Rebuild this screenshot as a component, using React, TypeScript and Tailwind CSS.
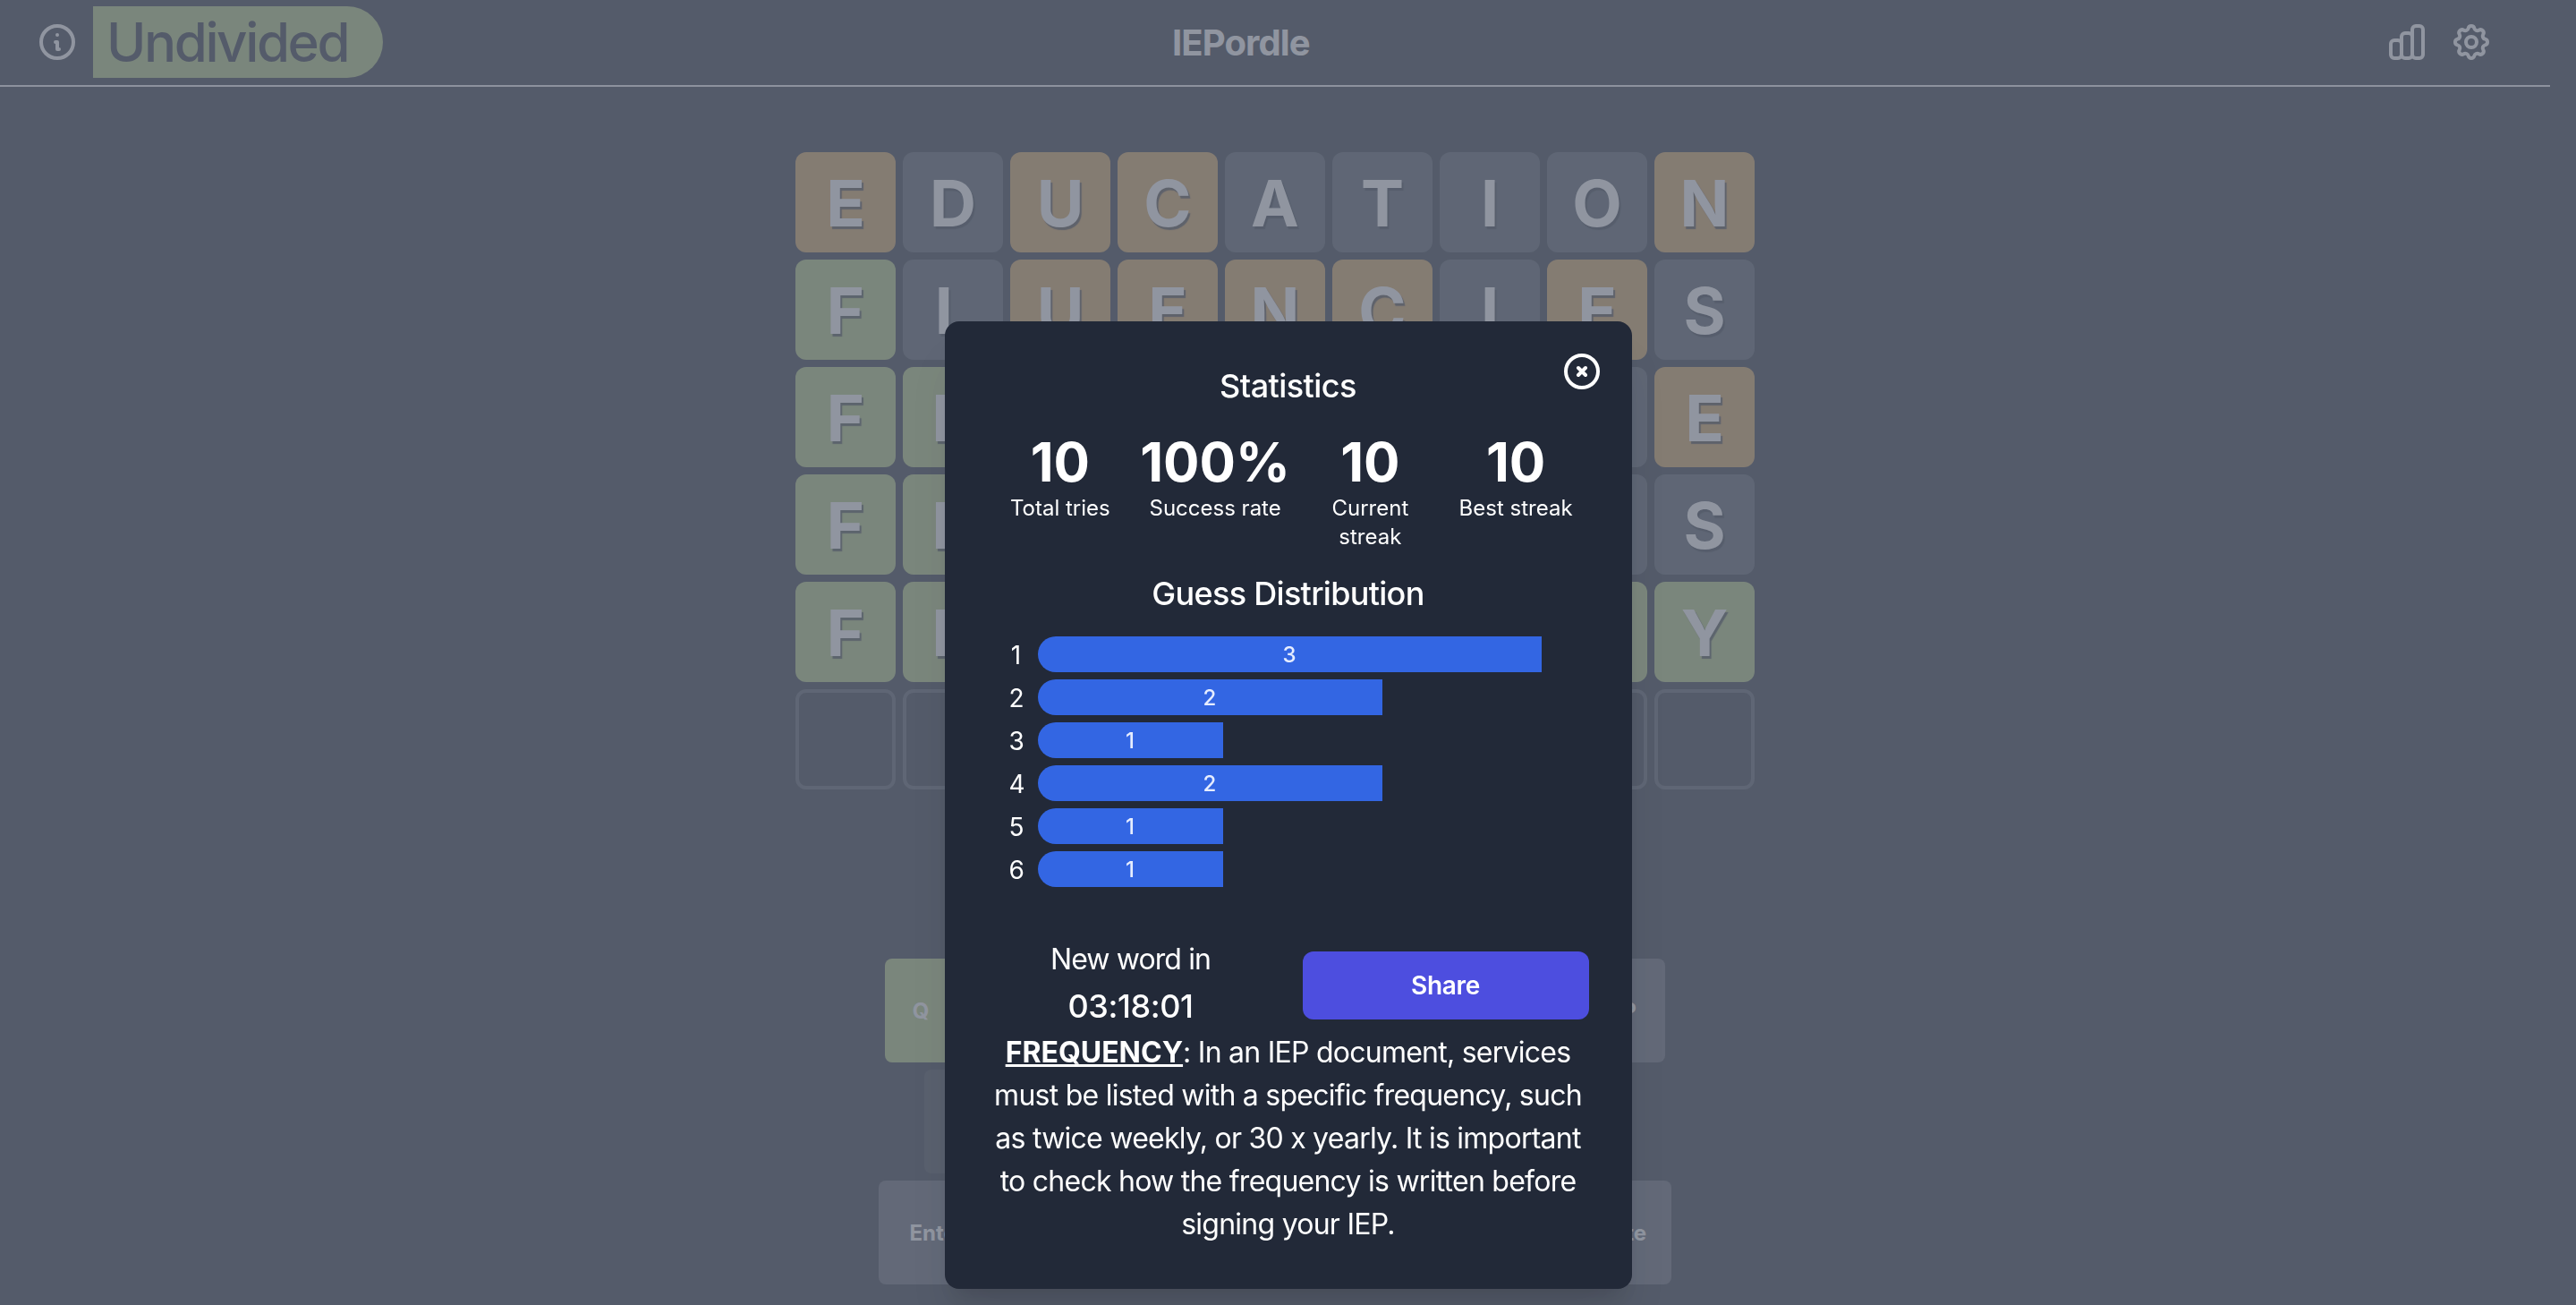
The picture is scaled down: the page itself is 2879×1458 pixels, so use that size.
import React from "react";

type S = "g" | "o" | "a" | "e";
const rows: { word: string; st: string }[] = [
  { word: "EDUCATION", st: "oaooaaaao" },
  { word: "FLUENCIES", st: "gaooooaoa" },
  { word: "FRANCHISE", st: "ggaooaaao" },
  { word: "FRESHNESS", st: "gggaooaaa" },
  { word: "FREQUENCY", st: "ggggggggg" },
  { word: "         ", st: "eeeeeeeee" },
];

const tileBg: Record<S, string> = {
  g: "bg-[#a8c270]",
  o: "bg-[#d09a48]",
  a: "bg-[#3c4654]",
  e: "border-4 border-[#3c4654]",
};

const keys1 = "QWERTYUIOP".split("");
const keys2 = "ASDFGHJKL".split("");
const keys3 = "ZXCVBNM".split("");
const keyBg: Record<string, string> = { Q: "bg-[#a8c270]", A: "bg-[#272d3b]" };

const stats = [
  ["10", "Total tries"],
  ["100%", "Success rate"],
  ["10", "Current streak"],
  ["10", "Best streak"],
];

const dist: { n: number; c: number; w: string }[] = [
  { n: 1, c: 3, w: "w-[563px]" },
  { n: 2, c: 2, w: "w-[385px]" },
  { n: 3, c: 1, w: "w-[207px]" },
  { n: 4, c: 2, w: "w-[385px]" },
  { n: 5, c: 1, w: "w-[207px]" },
  { n: 6, c: 1, w: "w-[207px]" },
];

function Key({ label, wide, bg }: { label: string; wide?: boolean; bg: string }) {
  return (
    <div
      className={`flex h-[116px] items-center justify-center rounded-lg pt-[2px] text-2xl font-bold text-white ${
        wide ? "w-[131px]" : "w-20"
      } ${bg}`}
    >
      {label}
    </div>
  );
}

function HIcon({ d, className }: { d: string[]; className: string }) {
  return (
    <svg viewBox="0 0 24 24" fill="none" stroke="currentColor" strokeWidth={2} strokeLinecap="round" strokeLinejoin="round" className={className}>
      {d.map((p) => (
        <path key={p} d={p} />
      ))}
    </svg>
  );
}

export default function App() {
  return (
    <div className="relative h-[1458px] w-full overflow-hidden bg-[#131a28] font-['Inter',sans-serif] text-white">
      <div className="w-[2850px]">
        <header className="flex h-[97px] items-start border-b-2 border-[#f4f4f6] pr-16">
          <div className="flex items-start pl-10 pt-[7px]">
            <HIcon className="mt-4 h-12 w-12 text-white" d={["M13 16h-1v-4h-1m1-4h.01M21 12a9 9 0 11-18 0 9 9 0 0118 0z"]} />
            <div className="ml-4 flex h-20 w-[324px] items-center rounded-r-[40px] bg-[#a8c270] pl-[15px] text-[60px] font-medium tracking-[-2.4px] text-[#131a28]">
              Undivided
            </div>
          </div>
          <h1 className="ml-[882px] mt-6 text-[40px] font-bold leading-[48px] tracking-[-0.9px]">IEPordle</h1>
          <div className="ml-auto mt-[23px] flex gap-6">
            <HIcon className="h-12 w-12 text-white" d={["M9 19v-6a2 2 0 00-2-2H5a2 2 0 00-2 2v6a2 2 0 002 2h2a2 2 0 002-2zm0 0V9a2 2 0 012-2h2a2 2 0 012 2v10m-6 0a2 2 0 002 2h2a2 2 0 002-2m0 0V5a2 2 0 012-2h2a2 2 0 012 2v14a2 2 0 01-2 2h-2a2 2 0 01-2-2z"]} />
            <HIcon className="h-12 w-12 text-white" d={["M10.325 4.317c.426-1.756 2.924-1.756 3.35 0a1.724 1.724 0 002.573 1.066c1.543-.94 3.31.826 2.37 2.37a1.724 1.724 0 001.065 2.572c1.756.426 1.756 2.924 0 3.35a1.724 1.724 0 00-1.066 2.573c.94 1.543-.826 3.31-2.37 2.37a1.724 1.724 0 00-2.572 1.065c-.426 1.756-2.924 1.756-3.35 0a1.724 1.724 0 00-2.573-1.066c-1.543.94-3.31-.826-2.37-2.37a1.724 1.724 0 00-1.065-2.572c-1.756-.426-1.756-2.924 0-3.35a1.724 1.724 0 001.066-2.573c-.94-1.543.826-3.31 2.37-2.37.996.608 2.296.07 2.572-1.065z", "M15 12a3 3 0 11-6 0 3 3 0 016 0z"]} />
          </div>
        </header>

        <main className="mt-[73px] flex flex-col items-center gap-2">
          {rows.map((r, i) => (
            <div key={i} className="flex gap-2">
              {r.word.split("").map((ch, j) => (
                <div
                  key={j}
                  className={`flex h-28 w-28 items-center justify-center rounded-xl pt-0.5 text-7xl font-bold [text-shadow:2px_3px_1px_rgba(19,26,40,0.8)] ${tileBg[r.st[j] as S]}`}
                >
                  {ch.trim()}
                </div>
              ))}
            </div>
          ))}
        </main>

        <section className="mt-[189px] flex flex-col items-center gap-2">
          <div className="flex gap-2">
            {keys1.map((k) => (
              <Key key={k} label={k} bg={keyBg[k] ?? "bg-[#4b5060]"} />
            ))}
          </div>
          <div className="flex gap-2">
            {keys2.map((k) => (
              <Key key={k} label={k} bg={keyBg[k] ?? "bg-[#4b5060]"} />
            ))}
          </div>
          <div className="flex gap-2">
            <Key label="Enter" wide bg="bg-[#4b5060]" />
            {keys3.map((k) => (
              <Key key={k} label={k} bg="bg-[#4b5060]" />
            ))}
            <Key label="Delete" wide bg="bg-[#4b5060]" />
          </div>
        </section>
      </div>

      <div className="fixed inset-0 bg-[#6b7280]/75" />

      <div className="fixed inset-0 flex items-end justify-center pb-[18px]">
        <div className="relative w-[768px] rounded-2xl bg-[#222938] p-12 text-center shadow-[0_40px_50px_-10px_rgba(0,0,0,0.1),0_16px_20px_-12px_rgba(0,0,0,0.1)]">
          <button className="absolute right-8 top-8 text-white">
            <HIcon className="h-12 w-12" d={["M10 14l2-2m0 0l2-2m-2 2l-2-2m2 2l2 2m7-2a9 9 0 11-18 0 9 9 0 0118 0z"]} />
          </button>

          <h3 className="text-4xl font-medium leading-[48px] tracking-[-0.55px]">Statistics</h3>

          <div className="mb-[15px] mt-[17px] flex justify-center">
            {stats.map(([v, l]) => (
              <div key={l} className="m-2 w-1/4 text-center">
                <div className="text-[60px] font-bold leading-[72px]">{v}</div>
                <div className="text-2xl leading-8">{l}</div>
              </div>
            ))}
          </div>

          <h4 className="text-4xl font-medium leading-[48px] tracking-[-0.7px]">Guess Distribution</h4>

          <div className="mt-6 flex flex-col gap-2 pl-6">
            {dist.map((d) => (
              <div key={d.n} className="flex h-10 items-center">
                <div className="w-4 pt-px text-center text-[28px] leading-10">{d.n}</div>
                <div className={`ml-4 flex h-10 items-center justify-center rounded-l-full bg-[#3366e3] pt-px text-2xl font-medium text-[#e6edff] ${d.w}`}>
                  {d.c}
                </div>
              </div>
            ))}
          </div>

          <div className="mt-[57px] grid grid-cols-2 items-center gap-8">
            <div>
              <div className="text-[32px] leading-[48px] tracking-[-0.9px]">New word in</div>
              <div className="text-4xl font-medium leading-[56px] tracking-[-0.4px]">03:18:01</div>
            </div>
            <button className="mt-[2px] flex h-[76px] items-center justify-center rounded-xl bg-[#4d4edf] text-[28px] font-semibold tracking-[-0.3px]">Share</button>
          </div>

          <p className="text-[32px] leading-[48px] tracking-[-0.75px]">
            <span className="font-bold tracking-normal underline">FREQUENCY</span>: In an IEP document, services must be listed with a specific frequency, such as twice weekly, or 30 x yearly. It is important to check how the frequency is written before signing your IEP.
          </p>
        </div>
      </div>
    </div>
  );
}
